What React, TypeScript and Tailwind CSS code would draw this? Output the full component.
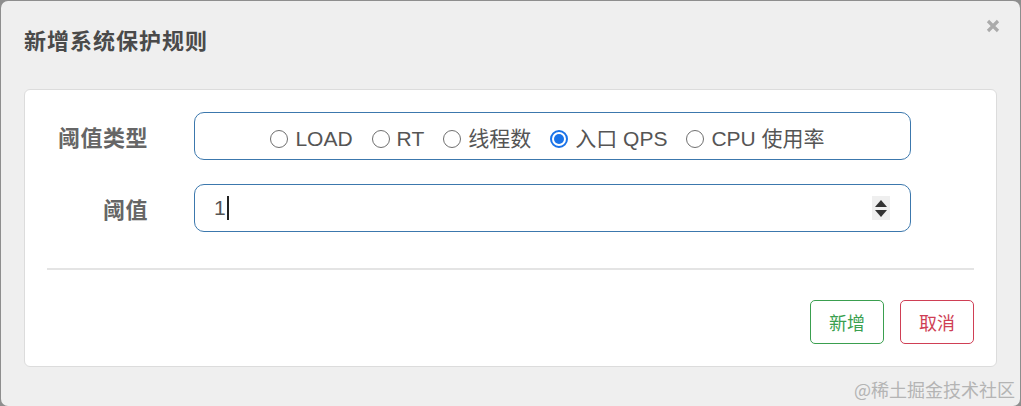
import React from "react";

const Radio = ({ checked, label }: { checked?: boolean; label: string }) => (
  <label className="flex items-center gap-[7px]">
    {checked ? (
      <span className="w-[18px] h-[18px] rounded-full border-[2px] border-[#1a73e8] bg-white flex items-center justify-center">
        <span className="w-[10px] h-[10px] rounded-full bg-[#1a73e8]" />
      </span>
    ) : (
      <span className="w-[18px] h-[18px] rounded-full border border-[#6f6f6f] bg-white" />
    )}
    <span>{label}</span>
  </label>
);

export default function App() {
  return (
    <div className="w-[1021px] h-[406px] bg-[#8e8e8e] overflow-hidden" style={{ fontFamily: '"Liberation Sans", "Noto Sans CJK SC", sans-serif' }}>
      <div className="relative w-[1019px] h-[405px] ml-px mt-px rounded-[7px] bg-[#efefef] flex flex-col">
        <div className="h-[88px] flex items-center pl-[23px] pb-[12px]">
          <h3 className="text-[22px] leading-none font-bold text-[#4a4a4a] tracking-[1px]" style={{ fontFamily: '"Noto Sans CJK SC", sans-serif' }}>
            新增系统保护规则
          </h3>
        </div>
        <svg className="absolute left-[985px] top-[18px]" width="14" height="14" viewBox="0 0 14 14">
          <path d="M2 2 L12 12 M12 2 L2 12" stroke="#ababab" strokeWidth="3.2" strokeLinecap="butt" />
        </svg>

        <div className="ml-[23px] w-[973px] h-[278px] bg-white border border-[#dcdcdc] rounded-[6px] px-[22px] pt-[22px]">
          <div className="flex items-center">
            <div className="w-[101px] text-right text-[22px] font-bold text-[#666] tracking-[0.5px]" style={{ fontFamily: '"Noto Sans CJK SC", sans-serif' }}>
              阈值类型
            </div>
            <div className="ml-[46px] w-[717px] h-[48px] border border-[#3c78ad] rounded-[10px] flex items-center justify-center gap-[19px] text-[21px] text-[#555] pr-[10px] pt-[5px]" style={{ fontFamily: '"Liberation Sans", "Noto Sans CJK SC", sans-serif' }}>
              <Radio label="LOAD" />
              <Radio label="RT" />
              <Radio label="线程数" />
              <Radio checked label="入口 QPS" />
              <Radio label="CPU 使用率" />
            </div>
          </div>
          <div className="flex items-center mt-[24px]">
            <div className="w-[101px] text-right text-[22px] font-bold text-[#666] tracking-[0.5px]" style={{ fontFamily: '"Noto Sans CJK SC", sans-serif' }}>
              阈值
            </div>
            <div className="ml-[46px] w-[717px] h-[48px] border border-[#3c78ad] rounded-[10px] flex items-center pl-[19px] pr-[20px] text-[21px] text-[#555]">
              <span>1</span>
              <span className="ml-[1px] w-[2px] h-[24px] bg-[#222]" />
              <div className="ml-auto w-[18px] h-[24px] bg-[#efefef] flex flex-col items-center justify-center gap-[3px]">
                <svg width="12" height="7" viewBox="0 0 12 7"><path d="M6 0 L12 7 L0 7 Z" fill="#333" /></svg>
                <svg width="12" height="7" viewBox="0 0 12 7"><path d="M0 0 L12 0 L6 7 Z" fill="#333" /></svg>
              </div>
            </div>
          </div>
          <div className="mt-[36px] h-[2px] bg-[#e4e4e4]" />
          <div className="mt-[30px] flex justify-end gap-[16px]" style={{ fontFamily: '"Noto Sans CJK SC", sans-serif' }}>
            <button className="w-[74px] h-[44px] border border-[#3a9f4f] rounded-[5px] text-[#3a9f4f] text-[18px] bg-white">新增</button>
            <button className="w-[74px] h-[44px] border border-[#cf3f55] rounded-[5px] text-[#cf3f55] text-[18px] bg-white">取消</button>
          </div>
        </div>
        <div className="absolute right-[5px] bottom-[8px] text-[18px] leading-none text-[#b4b4b4]" style={{ fontFamily: '"Noto Sans CJK SC", sans-serif' }}>
          @稀土掘金技术社区
        </div>
      </div>
    </div>
  );
}
